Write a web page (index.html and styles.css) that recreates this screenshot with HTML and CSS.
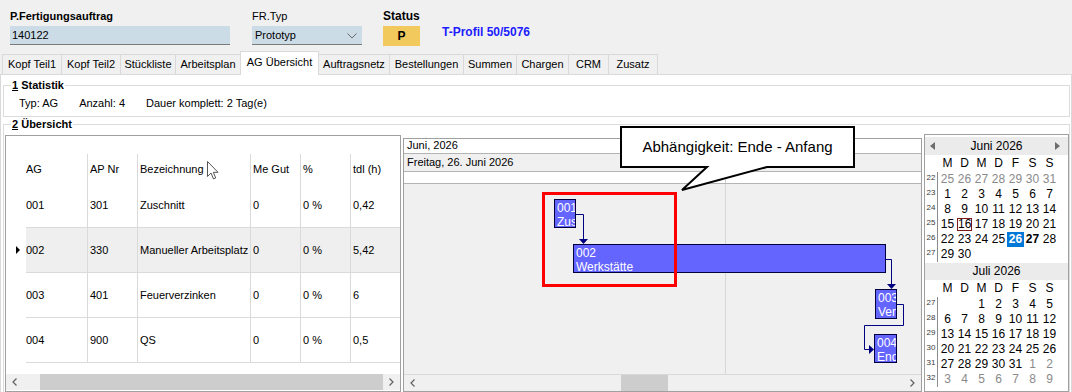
FILE: index.html
```html
<!DOCTYPE html>
<html lang="de">
<head>
    <meta charset="UTF-8">
    <meta name="viewport" content="width=device-width, initial-scale=1.0">
    <title>AG Übersicht</title>
    <link rel="stylesheet" href="styles.css">
</head>
<body>

    <div class="header">
        <div class="field field--order">
            <p class="field__label">P.Fertigungsauftrag</p>
            <div class="field__input">140122</div>
        </div>
        <div class="field field--type">
            <p class="field__label field__label--normal">FR.Typ</p>
            <div class="field__input field__input--select">
                Prototyp
                <svg class="field__chevron" width="10" height="6" viewBox="0 0 10 6"><polyline points="0.5,0.5 5,5 9.5,0.5" fill="none" stroke="#6a6a6a" stroke-width="1"/></svg>
            </div>
        </div>
        <div class="field field--status">
            <p class="field__label field__label--big">Status</p>
            <div class="status">P</div>
        </div>
        <div class="profile">T-Profil 50/5076</div>
    </div>

    <div class="tabs">
        <div class="tab">Kopf Teil1</div>
        <div class="tab">Kopf Teil2</div>
        <div class="tab">Stückliste</div>
        <div class="tab">Arbeitsplan</div>
        <div class="tab tab--active">AG Übersicht</div>
        <div class="tab">Auftragsnetz</div>
        <div class="tab">Bestellungen</div>
        <div class="tab">Summen</div>
        <div class="tab">Chargen</div>
        <div class="tab">CRM</div>
        <div class="tab">Zusatz</div>
    </div>

    <div class="page">
        <fieldset class="group group--stats">
            <legend class="group__title"><u>1</u> Statistik</legend>
            <div class="stats">
                <span>Typ: AG</span>
                <span>Anzahl: 4</span>
                <span>Dauer komplett: 2 Tag(e)</span>
            </div>
        </fieldset>

        <fieldset class="group group--overview">
            <legend class="group__title"><u>2</u> Übersicht</legend>
            <div class="overview">

                <div class="grid">
                    <div class="grid__spacer"></div>
                    <div class="grid__row grid__row--head">
                        <div class="grid__cell grid__cell--mark"></div>
                        <div class="grid__cell grid__cell--first">AG</div>
                        <div class="grid__cell">AP Nr</div>
                        <div class="grid__cell">Bezeichnung</div>
                        <div class="grid__cell">Me Gut</div>
                        <div class="grid__cell">%</div>
                        <div class="grid__cell">tdl (h)</div>
                    </div>
                    <div class="grid__row">
                        <div class="grid__cell grid__cell--mark"></div>
                        <div class="grid__cell grid__cell--first">001</div>
                        <div class="grid__cell">301</div>
                        <div class="grid__cell">Zuschnitt</div>
                        <div class="grid__cell">0</div>
                        <div class="grid__cell">0 %</div>
                        <div class="grid__cell">0,42</div>
                    </div>
                    <div class="grid__row grid__row--current">
                        <div class="grid__cell grid__cell--mark"><span class="grid__arrow"></span></div>
                        <div class="grid__cell grid__cell--first">002</div>
                        <div class="grid__cell">330</div>
                        <div class="grid__cell">Manueller Arbeitsplatz</div>
                        <div class="grid__cell">0</div>
                        <div class="grid__cell">0 %</div>
                        <div class="grid__cell">5,42</div>
                    </div>
                    <div class="grid__row">
                        <div class="grid__cell grid__cell--mark"></div>
                        <div class="grid__cell grid__cell--first">003</div>
                        <div class="grid__cell">401</div>
                        <div class="grid__cell">Feuerverzinken</div>
                        <div class="grid__cell">0</div>
                        <div class="grid__cell">0 %</div>
                        <div class="grid__cell">6</div>
                    </div>
                    <div class="grid__row">
                        <div class="grid__cell grid__cell--mark"></div>
                        <div class="grid__cell grid__cell--first">004</div>
                        <div class="grid__cell">900</div>
                        <div class="grid__cell">QS</div>
                        <div class="grid__cell">0</div>
                        <div class="grid__cell">0 %</div>
                        <div class="grid__cell">0,5</div>
                    </div>
                    <div class="grid__filler"></div>
                    <div class="scrollbar">
                        <div class="scrollbar__arrow"><svg width="5" height="8" viewBox="0 0 5 8"><polyline points="4.5,0.5 1,4 4.5,7.5" fill="none" stroke="#606060" stroke-width="1.2"/></svg></div>
                        <div class="scrollbar__track"><div class="scrollbar__thumb scrollbar__thumb--grid"></div></div>
                        <div class="scrollbar__arrow"><svg width="5" height="8" viewBox="0 0 5 8"><polyline points="0.5,0.5 4,4 0.5,7.5" fill="none" stroke="#606060" stroke-width="1.2"/></svg></div>
                    </div>
                    <svg class="cursor" width="12" height="20" viewBox="0 0 12 20"><path d="M0.5 0.5 L0.5 15.5 L4 12 L6.5 18 L8.7 17 L6.3 11.3 L11 11.3 Z" fill="#fff" stroke="#555" stroke-width="1"/></svg>
                </div>

                <div class="gantt">
                    <div class="gantt__month">Juni, 2026</div>
                    <div class="gantt__day">Freitag, 26. Juni 2026</div>
                    <div class="gantt__hours"><div class="gantt__hour"></div></div>
                    <div class="gantt__body">
                        <div class="gantt__line"></div>
                        <div class="bar bar--1">001<br>Zuschnitt</div>
                        <div class="bar bar--2">002<br>Werkstätte</div>
                        <div class="bar bar--3">003<br>Verzinken</div>
                        <div class="bar bar--4">004<br>Endprüfung</div>
                        <svg class="gantt__links" width="517" height="190" viewBox="0 0 517 190">
                            <g fill="none" stroke="#000080" stroke-width="1">
                                <polyline points="172,30.5 179.5,30.5 179.5,56"/>
                                <polyline points="482,75.5 487.5,75.5 487.5,101"/>
                                <polyline points="493,120.5 499.5,120.5 499.5,141.5 460.5,141.5 460.5,165.5 466,165.5"/>
                            </g>
                            <g fill="#000080">
                                <polygon points="175,55 184,55 179.5,60"/>
                                <polygon points="483,100 492,100 487.5,105"/>
                                <polygon points="465,161 465,170 470,165.5"/>
                            </g>
                        </svg>
                        <div class="highlight"></div>
                    </div>
                    <div class="scrollbar">
                        <div class="scrollbar__arrow"><svg width="5" height="8" viewBox="0 0 5 8"><polyline points="4.5,0.5 1,4 4.5,7.5" fill="none" stroke="#606060" stroke-width="1.2"/></svg></div>
                        <div class="scrollbar__track"><div class="scrollbar__thumb scrollbar__thumb--gantt"></div></div>
                        <div class="scrollbar__arrow"><svg width="5" height="8" viewBox="0 0 5 8"><polyline points="0.5,0.5 4,4 0.5,7.5" fill="none" stroke="#606060" stroke-width="1.2"/></svg></div>
                    </div>
                    <div class="callout">
                        <svg class="callout__shape" width="238" height="68" viewBox="0 0 238 68"><path d="M2 2 H235 V42 H148 L63 65 L88 42 H2 Z" fill="#fff" stroke="#000" stroke-width="2" stroke-linejoin="miter"/></svg>
                        <span class="callout__text">Abhängigkeit: Ende - Anfang</span>
                    </div>
                </div>

                <div class="calendar">
                    <div class="calendar__title">
                        <span class="calendar__prev"></span>
                        Juni 2026
                        <span class="calendar__next"></span>
                    </div>
                    <div class="calendar__row calendar__row--names"><span class="calendar__week calendar__week--empty"></span><span class="calendar__day">M</span><span class="calendar__day">D</span><span class="calendar__day">M</span><span class="calendar__day">D</span><span class="calendar__day">F</span><span class="calendar__day">S</span><span class="calendar__day">S</span></div>
                    <div class="calendar__row"><span class="calendar__week">22</span><span class="calendar__day calendar__day--other">25</span><span class="calendar__day calendar__day--other">26</span><span class="calendar__day calendar__day--other">27</span><span class="calendar__day calendar__day--other">28</span><span class="calendar__day calendar__day--other">29</span><span class="calendar__day calendar__day--other">30</span><span class="calendar__day calendar__day--other">31</span></div>
                    <div class="calendar__row"><span class="calendar__week">23</span><span class="calendar__day">1</span><span class="calendar__day">2</span><span class="calendar__day">3</span><span class="calendar__day">4</span><span class="calendar__day">5</span><span class="calendar__day">6</span><span class="calendar__day">7</span></div>
                    <div class="calendar__row"><span class="calendar__week">24</span><span class="calendar__day">8</span><span class="calendar__day">9</span><span class="calendar__day">10</span><span class="calendar__day">11</span><span class="calendar__day">12</span><span class="calendar__day">13</span><span class="calendar__day">14</span></div>
                    <div class="calendar__row"><span class="calendar__week">25</span><span class="calendar__day">15</span><span class="calendar__day"><span class="calendar__today">16</span></span><span class="calendar__day">17</span><span class="calendar__day">18</span><span class="calendar__day">19</span><span class="calendar__day">20</span><span class="calendar__day">21</span></div>
                    <div class="calendar__row"><span class="calendar__week">26</span><span class="calendar__day">22</span><span class="calendar__day">23</span><span class="calendar__day">24</span><span class="calendar__day">25</span><span class="calendar__day calendar__day--selected">26</span><span class="calendar__day calendar__day--bold">27</span><span class="calendar__day">28</span></div>
                    <div class="calendar__row"><span class="calendar__week">27</span><span class="calendar__day">29</span><span class="calendar__day">30</span></div>

                    <div class="calendar__title calendar__title--next">Juli 2026</div>
                    <div class="calendar__row calendar__row--names"><span class="calendar__week calendar__week--empty"></span><span class="calendar__day">M</span><span class="calendar__day">D</span><span class="calendar__day">M</span><span class="calendar__day">D</span><span class="calendar__day">F</span><span class="calendar__day">S</span><span class="calendar__day">S</span></div>
                    <div class="calendar__row"><span class="calendar__week">27</span><span class="calendar__day"></span><span class="calendar__day"></span><span class="calendar__day">1</span><span class="calendar__day">2</span><span class="calendar__day">3</span><span class="calendar__day">4</span><span class="calendar__day">5</span></div>
                    <div class="calendar__row"><span class="calendar__week">28</span><span class="calendar__day">6</span><span class="calendar__day">7</span><span class="calendar__day">8</span><span class="calendar__day">9</span><span class="calendar__day">10</span><span class="calendar__day">11</span><span class="calendar__day">12</span></div>
                    <div class="calendar__row"><span class="calendar__week">29</span><span class="calendar__day">13</span><span class="calendar__day">14</span><span class="calendar__day">15</span><span class="calendar__day">16</span><span class="calendar__day">17</span><span class="calendar__day">18</span><span class="calendar__day">19</span></div>
                    <div class="calendar__row"><span class="calendar__week">30</span><span class="calendar__day">20</span><span class="calendar__day">21</span><span class="calendar__day">22</span><span class="calendar__day">23</span><span class="calendar__day">24</span><span class="calendar__day">25</span><span class="calendar__day">26</span></div>
                    <div class="calendar__row"><span class="calendar__week">31</span><span class="calendar__day">27</span><span class="calendar__day">28</span><span class="calendar__day">29</span><span class="calendar__day">30</span><span class="calendar__day">31</span><span class="calendar__day calendar__day--other">1</span><span class="calendar__day calendar__day--other">2</span></div>
                    <div class="calendar__row"><span class="calendar__week">32</span><span class="calendar__day calendar__day--other">3</span><span class="calendar__day calendar__day--other">4</span><span class="calendar__day calendar__day--other">5</span><span class="calendar__day calendar__day--other">6</span><span class="calendar__day calendar__day--other">7</span><span class="calendar__day calendar__day--other">8</span><span class="calendar__day calendar__day--other">9</span></div>
                </div>

            </div>
        </fieldset>
    </div>

</body>
</html>
```

FILE: styles.css
```css
* {
    box-sizing: border-box;
}

body {
    margin: 0;
    width: 1072px;
    height: 392px;
    overflow: hidden;
    background: #f0f0f0;
    font-family: "Liberation Sans", Arial, sans-serif;
    font-size: 11px;
    color: #000;
}

p {
    margin: 0;
}

/* header */

.header {
    display: flex;
    align-items: flex-start;
    height: 51px;
    padding: 10px 0 0 10px;
}

.field__label {
    font-weight: bold;
    line-height: 13px;
    height: 13px;
}

.field__label--normal {
    font-weight: normal;
}

.field__label--big {
    font-size: 12px;
}

.field__input {
    display: flex;
    align-items: center;
    margin-top: 3px;
    width: 220px;
    height: 19px;
    padding-left: 2px;
    background: #ccdce6;
    border-bottom: 1px solid #7a7a7a;
}

.field--type {
    margin-left: 22px;
}

.field__input--select {
    position: relative;
    width: 110px;
    padding-left: 3px;
}

.field__chevron {
    position: absolute;
    right: 5px;
    top: 7px;
}

.field--status {
    margin-left: 21px;
}

.status {
    margin-top: 3px;
    width: 37px;
    height: 20px;
    line-height: 20px;
    text-align: center;
    background: #f2c95c;
    font-weight: bold;
    font-size: 12px;
}

.profile {
    margin: 15px 0 0 22px;
    line-height: 15px;
    font-weight: bold;
    font-size: 12px;
    color: #1c1cff;
}

/* tabs */

.tabs {
    display: flex;
    align-items: flex-end;
    height: 23px;
    padding-left: 2px;
}

.tab {
    height: 20px;
    line-height: 18px;
    margin-right: -1px;
    text-align: center;
    border: 1px solid #d9d9d9;
    border-bottom: none;
    background: #f0f0f0;
    white-space: nowrap;
}

.tab:nth-child(1) { width: 60px; }
.tab:nth-child(2) { width: 60px; }
.tab:nth-child(3) { width: 56px; }
.tab:nth-child(4) { width: 66px; }
.tab:nth-child(5) { width: 79px; }
.tab:nth-child(6) { width: 72px; }
.tab:nth-child(7) { width: 75px; }
.tab:nth-child(8) { width: 54px; }
.tab:nth-child(9) { width: 53px; }
.tab:nth-child(10) { width: 41px; }
.tab:nth-child(11) { width: 50px; }

.tab--active {
    position: relative;
    z-index: 1;
    height: 24px;
    margin-bottom: -1px;
    line-height: 20px;
    background: #fff;
}

/* page */

.page {
    height: 320px;
    padding: 0 1px 0 2px;
    background: #fff;
    border: 1px solid #d9d9d9;
}

.group {
    margin: 0;
    padding: 0;
    min-width: 0;
    border: 1px solid #dcdcdc;
}

.group__title {
    margin-left: 7px;
    padding: 0 1px;
    line-height: 13px;
    font-weight: bold;
}

.group--stats {
    margin-top: 4px;
}

.stats {
    display: flex;
    gap: 21px;
    padding: 5px 0 7px 15px;
    line-height: 12px;
}

.group--overview {
    margin-top: 1px;
}

.overview {
    display: flex;
    align-items: flex-start;
    padding: 3px 0 0 1px;
}

/* grid */

.grid {
    position: relative;
    width: 396px;
    height: 257px;
    margin-top: 1px;
    margin-right: 2px;
    border: 1px solid #a0a0a0;
    background: #fff;
}

.grid__spacer {
    height: 18px;
}

.grid__row {
    display: grid;
    grid-template-columns: 20px 61px 50px 113px 50px 50px 50px;
    height: 45px;
}

.grid__row--head {
    height: 29px;
}

.grid__cell {
    display: flex;
    align-items: center;
    padding-left: 2px;
    border-left: 1px solid #dadada;
    border-bottom: 1px solid #dadada;
    white-space: nowrap;
    overflow: hidden;
}

.grid__row--head .grid__cell {
    border-bottom: none;
}

.grid__cell--mark,
.grid__cell--first {
    border-left: none;
}

.grid__cell--first {
    padding-left: 0;
}

.grid__cell--mark {
    border-bottom: none;
    justify-content: center;
    padding: 0 0 1px 3px;
}

.grid__row--current .grid__cell {
    background: #efefef;
}

.grid__row--current .grid__cell--mark {
    background: none;
}

.grid__arrow {
    width: 0;
    height: 0;
    border-left: 4px solid #000;
    border-top: 4px solid transparent;
    border-bottom: 4px solid transparent;
}

.grid__filler {
    height: 11px;
}

.cursor {
    position: absolute;
    left: 201px;
    top: 25px;
}

/* scrollbars */

.scrollbar {
    display: flex;
    height: 16px;
    background: #f0f0f0;
}

.scrollbar__arrow {
    display: flex;
    align-items: center;
    justify-content: center;
    width: 17px;
}

.scrollbar__track {
    flex: 1;
}

.scrollbar__thumb {
    height: 16px;
    background: #cdcdcd;
}

.scrollbar__thumb--grid {
    margin-left: 17px;
    width: 343px;
}

.scrollbar__thumb--gantt {
    margin-left: 200px;
    width: 47px;
}

/* gantt */

.gantt {
    position: relative;
    width: 519px;
    height: 254px;
    margin-top: 4px;
    margin-right: 2px;
    border: 1px solid #a0a0a0;
    background: #fff;
}

.gantt__month {
    height: 15px;
    line-height: 13px;
    padding-left: 3px;
    border-bottom: 1px solid #b4b4b4;
}

.gantt__day {
    height: 18px;
    line-height: 17px;
    padding-left: 3px;
    background: #f0f0f0;
    border-bottom: 1px solid #b4b4b4;
}

.gantt__hours {
    height: 12px;
    border-bottom: 1px solid #b4b4b4;
}

.gantt__hour {
    width: 322px;
    height: 11px;
    border-right: 1px solid #d2d2d2;
}

.gantt__body {
    position: relative;
    height: 191px;
    background: #f0f0f0;
    border-bottom: 1px solid #d9d9d9;
}

.gantt__line {
    position: absolute;
    left: 321px;
    top: 0;
    bottom: 0;
    width: 1px;
    background: #d6d6d6;
}

.gantt__links {
    position: absolute;
    left: 0;
    top: 0;
}

.bar {
    position: absolute;
    height: 29px;
    padding: 1px 0 0 2px;
    overflow: hidden;
    white-space: nowrap;
    line-height: 14px;
    font-size: 12px;
    color: #fff;
    background: #6464ff;
    border: 1px solid #000040;
}

.bar--1 { left: 150px; top: 15px; width: 22px; }
.bar--2 { left: 169px; top: 60px; width: 313px; }
.bar--3 { left: 471px; top: 105px; width: 22px; height: 30px; }
.bar--4 { left: 470px; top: 150px; width: 23px; }

.highlight {
    position: absolute;
    left: 138px;
    top: 8px;
    width: 135px;
    height: 95px;
    border: 3px solid #ff0000;
}

.callout {
    position: absolute;
    left: 215px;
    top: -14px;
    width: 238px;
    height: 68px;
    z-index: 2;
}

.callout__shape {
    position: absolute;
    left: 0;
    top: 0;
}

.callout__text {
    position: absolute;
    left: 2px;
    top: 2px;
    width: 233px;
    height: 40px;
    line-height: 40px;
    text-align: center;
    font-family: "Liberation Sans", Arial, sans-serif;
    font-size: 15px;
}

/* calendar */

.calendar {
    width: 145px;
    height: 258px;
    border: 1px solid #a0a0a0;
    background: #fff;
}

.calendar__title {
    position: relative;
    height: 18px;
    margin-top: 2px;
    line-height: 18px;
    text-align: center;
    font-size: 12px;
    background: #ebebeb;
}

.calendar__title--next {
    height: 17px;
    margin-top: 1px;
    line-height: 17px;
}

.calendar__prev,
.calendar__next {
    position: absolute;
    top: 5px;
    width: 0;
    height: 0;
    border-top: 4px solid transparent;
    border-bottom: 4px solid transparent;
}

.calendar__prev {
    left: 5px;
    border-right: 5px solid #6d6d6d;
}

.calendar__next {
    right: 8px;
    border-left: 5px solid #6d6d6d;
}

.calendar__row {
    display: flex;
    height: 15px;
    line-height: 15px;
    font-size: 12px;
}

.calendar__row--names {
    height: 17px;
    line-height: 17px;
}

.calendar__week {
    width: 13px;
    height: 15px;
    margin-right: 1px;
    padding-top: 1px;
    line-height: 10px;
    text-align: center;
    font-size: 8px;
    color: #3a3a3a;
    border-right: 1px solid #8c8c8c;
}

.calendar__week--empty {
    border-right-color: transparent;
}

.calendar__day {
    display: flex;
    align-items: center;
    justify-content: center;
    width: 17px;
}

.calendar__day--other {
    color: #8a8a8a;
}

.calendar__day--bold {
    font-weight: bold;
}

.calendar__day--selected {
    font-weight: bold;
    color: #fff;
    background: #0078d7;
}

.calendar__today {
    width: 15px;
    height: 13px;
    line-height: 11px;
    text-align: center;
    border: 1px solid #7b1a1a;
}
```
